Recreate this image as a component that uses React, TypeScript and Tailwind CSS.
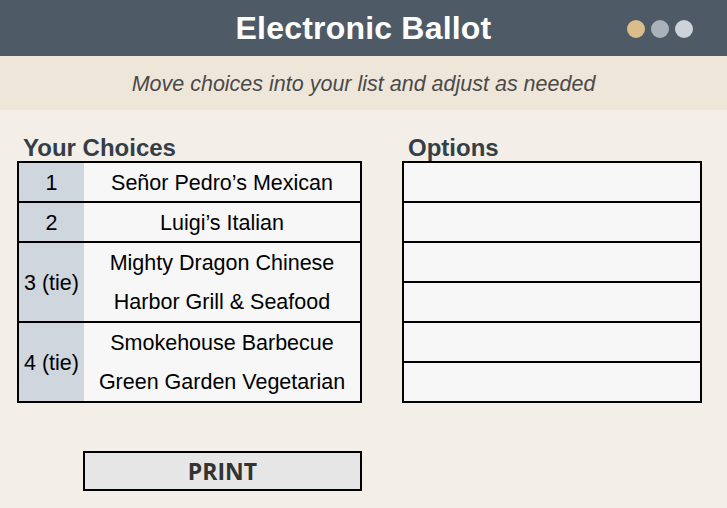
const choices = [
  { rank: "1", items: ["Señor Pedro’s Mexican"] },
  { rank: "2", items: ["Luigi’s Italian"] },
  { rank: "3 (tie)", items: ["Mighty Dragon Chinese", "Harbor Grill & Seafood"] },
  { rank: "4 (tie)", items: ["Smokehouse Barbecue", "Green Garden Vegetarian"] },
];

const font = { fontFamily: '"Liberation Sans", Arial, sans-serif' };

export default function App() {
  return (
    <div className="w-[727px] h-[508px] bg-[#f3eee7] overflow-hidden" style={font}>
      {/* Title bar */}
      <div className="relative h-[56px] bg-[#4e5a65] flex items-center justify-center">
        <h1 className="text-white text-[32px] font-bold leading-none tracking-[0.2px]">Electronic Ballot</h1>
        <div className="absolute right-[34px] top-[20px] flex gap-[6px]">
          <span className="w-[18px] h-[18px] rounded-full bg-[#dbbd8c]" />
          <span className="w-[18px] h-[18px] rounded-full bg-[#a9b2ba]" />
          <span className="w-[18px] h-[18px] rounded-full bg-[#cdd3d8]" />
        </div>
      </div>

      {/* Instructions */}
      <div className="h-[54px] bg-[#efe6da] flex items-center justify-center pt-[3px]">
        <p className="italic text-[21.5px] text-[#4a4a4a]">Move choices into your list and adjust as needed</p>
      </div>

      <div className="flex pl-[17px] pt-[24px] gap-[40px]">
        {/* Your choices */}
        <div className="w-[345px]">
          <h2 className="pl-[6px] text-[24px] leading-[27px] font-bold text-[#343e47]">Your Choices</h2>
          <div className="border-2 border-black">
            {choices.map((c, i) => (
              <div key={i} className={`flex ${i > 0 ? "border-t-2 border-black" : ""}`}>
                <div className="w-[65px] bg-[#cfd6de] flex items-center justify-center pt-[2px] text-[21.5px] text-black">
                  {c.rank}
                </div>
                <div className="flex-1 bg-[#f7f7f7]">
                  {c.items.map((it) => (
                    <div key={it} className={`flex items-center justify-center pt-[2px] text-[21.5px] text-black ${c.items.length > 1 ? "h-[39px]" : "h-[38px]"}`}>
                      {it}
                    </div>
                  ))}
                </div>
              </div>
            ))}
          </div>
          <button
            className="mt-[48px] ml-[66px] w-[279px] h-[40px] border-2 border-black bg-[#e6e6e6] text-[23px] font-bold text-[#333333]"
            style={{ fontFamily: '"Open Sans", sans-serif' }}
          >
            PRINT
          </button>
        </div>

        {/* Options */}
        <div className="w-[300px]">
          <h2 className="pl-[6px] text-[24px] leading-[27px] font-bold text-[#343e47]">Options</h2>
          <div className="border-2 border-black">
            {[0, 1, 2, 3, 4, 5].map((i) => (
              <div key={i} className={`h-[38px] bg-[#f7f7f7] box-content ${i > 0 ? "border-t-2 border-black" : ""}`} />
            ))}
          </div>
        </div>
      </div>
    </div>
  );
}
